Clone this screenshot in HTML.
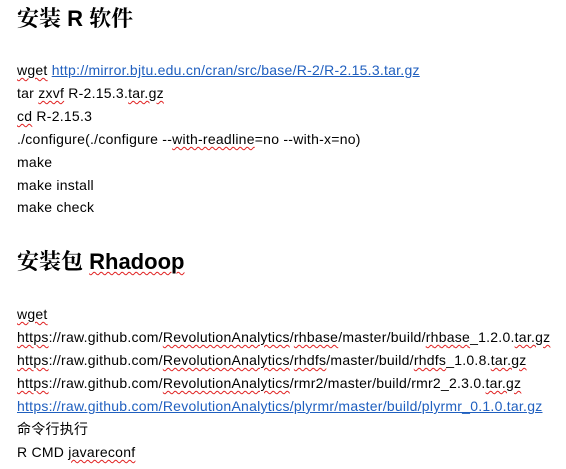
<!DOCTYPE html>
<html><head><meta charset="utf-8"><style>
body{margin:0;width:566px;height:469px;background:#fff;position:relative;overflow:hidden;font-family:"Liberation Sans","Noto Sans CJK SC",sans-serif;color:#000}
.l{position:absolute;left:17px;font-size:14px;line-height:22px;letter-spacing:0.25px;white-space:nowrap}
.h{position:absolute;left:17px;font-size:22px;font-weight:bold;line-height:26px;white-space:nowrap;font-family:"Liberation Sans","Noto Serif CJK SC",sans-serif}
.s{text-decoration:underline wavy #e02020;text-decoration-thickness:1px;text-underline-offset:2px}
a{color:#1f5fbf;text-decoration:underline}
</style></head><body>
<div class="h" style="top:6px">安装 R 软件</div>
<div class="l" style="top:59px"><span class="s">wget</span> <a>http://mirror.bjtu.edu.cn/cran/src/base/R-2/R-2.15.3.tar.gz</a></div>
<div class="l" style="top:82px">tar <span class="s">zxvf</span> R-2.15.3.<span class="s">tar.gz</span></div>
<div class="l" style="top:105px"><span class="s">cd</span> R-2.15.3</div>
<div class="l" style="top:128px">./configure(./configure --<span class="s">with-readline</span>=no --with-x=no)</div>
<div class="l" style="top:151px">make</div>
<div class="l" style="top:174px">make install</div>
<div class="l" style="top:196px">make check</div>
<div class="h" style="top:249px">安装包 <span class="s">Rhadoop</span></div>
<div class="l" style="top:303px"><span class="s">wget</span></div>
<div class="l" style="top:326px"><span class="s">https</span>://raw.github.com/<span class="s">RevolutionAnalytics</span>/<span class="s">rhbase</span>/master/build/<span class="s">rhbase</span>_1.2.0.<span class="s">tar.gz</span></div>
<div class="l" style="top:349px"><span class="s">https</span>://raw.github.com/<span class="s">RevolutionAnalytics</span>/<span class="s">rhdfs</span>/master/build/<span class="s">rhdfs</span>_1.0.8.<span class="s">tar.gz</span></div>
<div class="l" style="top:372px"><span class="s">https</span>://raw.github.com/<span class="s">RevolutionAnalytics</span>/rmr2/master/build/rmr2_2.3.0.<span class="s">tar.gz</span></div>
<div class="l" style="top:395px"><a>https://raw.github.com/RevolutionAnalytics/plyrmr/master/build/plyrmr_0.1.0.tar.gz</a></div>
<div class="l" style="top:418px">命令行执行</div>
<div class="l" style="top:441px">R CMD <span class="s">javareconf</span></div>
</body></html>
